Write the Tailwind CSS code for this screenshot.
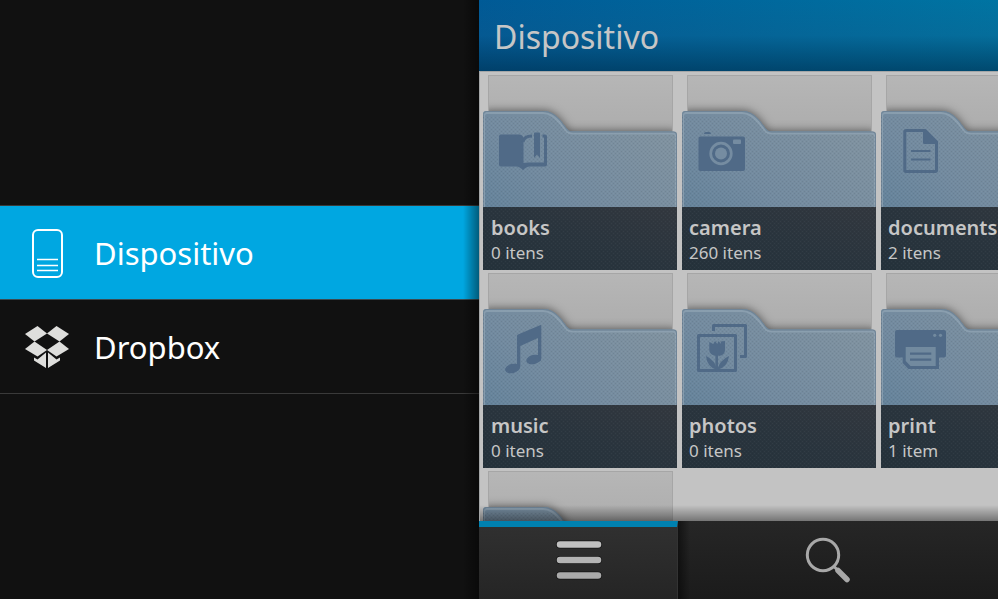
<!DOCTYPE html>
<html lang="pt">
<head>
  <meta charset="UTF-8" />
  <meta name="viewport" content="width=device-width, initial-scale=1.0" />
  <title>Dispositivo</title>
  <script src="https://cdn.jsdelivr.net/npm/@tailwindcss/browser@4"></script>
</head>
<body class="flex h-screen overflow-hidden bg-[#111111] font-['Noto_Sans','Open_Sans',sans-serif]">
  <!-- Shared folder shape -->
  <svg class="absolute size-0" aria-hidden="true">
    <defs>
      <linearGradient id="folderFill" x1="0" y1="1" x2="1" y2="0">
        <stop offset="0" stop-color="#5a7d97" />
        <stop offset="0.45" stop-color="#728a9f" />
        <stop offset="1" stop-color="#8394a0" />
      </linearGradient>
      <linearGradient id="labelFill" x1="0" y1="1" x2="1" y2="0">
        <stop offset="0" stop-color="#25323b" />
        <stop offset="0.5" stop-color="#2a353e" />
        <stop offset="1" stop-color="#33383f" />
      </linearGradient>
      <pattern id="weave" width="4" height="4" patternUnits="userSpaceOnUse">
        <path d="M0 0h1v1h-1zM2 2h1v1h-1z" fill="#fff" fill-opacity="0.05" />
        <path d="M2 0h1v1h-1zM0 2h1v1h-1z" fill="#000" fill-opacity="0.07" />
      </pattern>
      <symbol id="folder" viewBox="0 0 195 159">
        <path d="M0 159V3q0-3 3-3H60c8 0 13 4 18 10l6 8q2 2.500 6 2.500H191q3 0 3 3V159z" fill="url(#folderFill)" />
        <path d="M1 96V5q0-3 3-3H60c7 0 12 4 17 10l6 8q2 2.500 7 2.500H190q3 0 3 3V96" fill="none" stroke="#92a5b5" stroke-width="2" stroke-opacity="0.7" />
        <path d="M.5 96V3.500q0-3 3-3H60c8 0 13 4 18 10l6 8q2 2.500 6 2.500H190.500q3 0 3 3V96" fill="none" stroke="#6f8497" stroke-width="1" />
        <rect y="96" width="194" height="63" fill="url(#labelFill)" />
        <rect y="2" width="194" height="94" fill="url(#weave)" clip-path="path('M0 96V3H60c8 0 13 2 18 8l6 8q2 2.500 6 2.500H194V96z')" />
        <rect y="96" width="194" height="63" fill="url(#weave)" fill-opacity="0.7" />
      </symbol>
    </defs>
  </svg>

  <!-- Sidebar -->
  <aside class="relative flex w-[48%] shrink-0 flex-col justify-center">
    <nav class="border-t border-[#3a3a3a] text-[31px] text-white">
      <a href="#device" class="flex h-[94px] items-center gap-6 border-b border-[#3a4a50] bg-[#00a7e1] pl-6">
        <svg class="h-[50px] w-[46px]" viewBox="0 0 46 50" fill="none" stroke="#fff">
          <rect x="9" y="2" width="29" height="47" rx="5" stroke-width="2" />
          <path d="M13 31.500h21M13 37.500h21M13 42.500h21" stroke-width="1.600" />
        </svg>
        <span class="pt-0.5">Dispositivo</span>
      </a>
      <a href="#dropbox" class="flex h-[94px] items-center gap-6 border-b border-[#3a3a3a] pl-6">
        <svg class="h-[50px] w-[46px]" viewBox="0 0 46 50" fill="#dededc">
          <path d="M13.500 4L23 11.500 10.500 19.500 1 12z" />
          <path d="M32.500 4L45 12 35.500 19.500 23 11.500z" />
          <path d="M10.500 19.500L23 28 13.500 34.500 1 27z" />
          <path d="M35.500 19.500L45 27 32.500 34.500 23 28z" />
          <path d="M22 30.500V46L10 38.500V35.500l3.500 2z" />
          <path d="M24 30.500V46L36 38.500V35.500l-3.500 2z" />
        </svg>
        <span class="pt-0.5">Dropbox</span>
      </a>
    </nav>
    <div class="pointer-events-none absolute inset-y-0 right-0 w-4 bg-linear-to-l from-black/45 to-transparent"></div>
  </aside>

  <!-- File browser -->
  <main class="flex min-w-0 flex-1 flex-col overflow-hidden bg-[#c3c3c3] text-[#c6c6c6]">
    <header class="flex h-[71px] shrink-0 items-center bg-linear-to-r from-[#005a96] to-[#0074a2]">
      <div class="flex h-full w-full items-center bg-linear-to-b from-transparent via-[#1a5580]/20 to-[#003253]/65 pt-0.5 pl-[15px]">
        <h1 class="text-[32px]">Dispositivo</h1>
      </div>
    </header>

    <div class="relative min-h-0 flex-1 overflow-hidden border-t border-l border-[#a4a6a7]">
      <div class="grid grid-cols-[repeat(3,195px)] gap-x-1 gap-y-[3px] pt-[3px] pl-[3px]">
        <a href="#books" class="relative flex h-[195px] flex-col justify-between">
          <span class="absolute inset-x-[5px] top-0 h-20 overflow-hidden border border-[#a6a6a6] bg-linear-to-b from-[#b6b6b6] to-[#a9a9a9]">
            <svg class="absolute top-[35px] -left-1.5 h-[159px] w-[195px] overflow-visible drop-shadow-[0_0_5px_rgba(0,0,0,0.55)]"><use href="#folder" /></svg>
          </span>
          <svg class="absolute bottom-0 left-0 h-[159px] w-[195px]"><use href="#folder" /></svg>
          <svg class="relative mt-[52px] ml-3 h-[52px] w-14" viewBox="0 0 56 52" fill="#506a87">
            <path d="M6 7.500H24q3 0 4.500 3V36q3-.5 5-.5H49V10.500H47.500V7.500H50q2 0 2 2V37.500q0 2-2 2H34.500q-3 0-6.500 3.700-3.500-3.700-6.500-3.700H6q-2 0-2-2V9.500q0-2 2-2z" />
            <path d="M28 15q1-6 9-6" fill="none" stroke="#506a87" stroke-width="3" />
            <path d="M39 6.500q0-1 1-1h4q1 0 1 1V31l-3-3.500-3 3.500z" />
          </svg>
          <span class="relative h-[63px] pt-[9px] pl-2">
            <span class="block text-xl leading-6 font-semibold">books</span>
            <span class="block text-[17px] leading-[26px]">0 itens</span>
          </span>
        </a>

        <a href="#camera" class="relative flex h-[195px] flex-col justify-between">
          <span class="absolute inset-x-[5px] top-0 h-20 overflow-hidden border border-[#a6a6a6] bg-linear-to-b from-[#b6b6b6] to-[#a9a9a9]">
            <svg class="absolute top-[35px] -left-1.5 h-[159px] w-[195px] overflow-visible drop-shadow-[0_0_5px_rgba(0,0,0,0.55)]"><use href="#folder" /></svg>
          </span>
          <svg class="absolute bottom-0 left-0 h-[159px] w-[195px]"><use href="#folder" /></svg>
          <svg class="relative mt-[52px] ml-3 h-[52px] w-14" viewBox="0 0 56 52" fill="#506a87">
            <path d="M10 7q0-2 2-2h3q2 0 2 2z" />
            <rect x="4.500" y="9.500" width="46.500" height="34.500" rx="2" />
            <circle cx="27" cy="26.500" r="10.300" fill="none" stroke="#758ca1" stroke-width="2.700" />
            <circle cx="27" cy="26.500" r="6" fill="#758ca1" />
            <rect x="39" y="12.500" width="8" height="4.500" rx="1" fill="#758ca1" />
          </svg>
          <span class="relative h-[63px] pt-[9px] pl-[7px]">
            <span class="block text-xl leading-6 font-semibold">camera</span>
            <span class="block text-[17px] leading-[26px]">260 itens</span>
          </span>
        </a>

        <a href="#documents" class="relative flex h-[195px] flex-col justify-between">
          <span class="absolute inset-x-[5px] top-0 h-20 overflow-hidden border border-[#a6a6a6] bg-linear-to-b from-[#b6b6b6] to-[#a9a9a9]">
            <svg class="absolute top-[35px] -left-1.5 h-[159px] w-[195px] overflow-visible drop-shadow-[0_0_5px_rgba(0,0,0,0.55)]"><use href="#folder" /></svg>
          </span>
          <svg class="absolute bottom-0 left-0 h-[159px] w-[195px]"><use href="#folder" /></svg>
          <svg class="relative mt-[52px] ml-3 h-[52px] w-14" viewBox="0 0 56 52" fill="#506a87">
            <path d="M32 3.500H13q-1.200 0-1.200 1.200V43.300q0 1.200 1.200 1.200H42.300q1.200 0 1.200-1.200V15z" fill="none" stroke="#506a87" stroke-width="3" />
            <path d="M30 2.500h3L45 14.500V17H31.500q-1.500 0-1.500-1.500z" />
            <path d="M18 24h19.500M18 32.500h19.500" stroke="#506a87" stroke-width="2.200" />
          </svg>
          <span class="relative h-[63px] pt-[9px] pl-[7px]">
            <span class="block text-xl leading-6 font-semibold">documents</span>
            <span class="block text-[17px] leading-[26px]">2 itens</span>
          </span>
        </a>

        <a href="#music" class="relative flex h-[195px] flex-col justify-between">
          <span class="absolute inset-x-[5px] top-0 h-20 overflow-hidden border border-[#a6a6a6] bg-linear-to-b from-[#b6b6b6] to-[#a9a9a9]">
            <svg class="absolute top-[35px] -left-1.5 h-[159px] w-[195px] overflow-visible drop-shadow-[0_0_5px_rgba(0,0,0,0.55)]"><use href="#folder" /></svg>
          </span>
          <svg class="absolute bottom-0 left-0 h-[159px] w-[195px]"><use href="#folder" /></svg>
          <svg class="relative mt-[52px] ml-3 h-[52px] w-14 overflow-visible" viewBox="0 0 56 52" fill="#506a87">
            <path d="M22 11q0-1 1-1.500L45 .2q1.300-.4 1.300 1V33q0 4-3.300 3.500V13L25.300 21V41q0 3-3.300 3z" />
            <ellipse cx="17.500" cy="43.500" rx="7.600" ry="4.600" transform="rotate(-14 17.500 43.500)" />
            <ellipse cx="38.700" cy="34.500" rx="7.600" ry="4.600" transform="rotate(-14 38.700 34.500)" />
          </svg>
          <span class="relative h-[63px] pt-[9px] pl-2">
            <span class="block text-xl leading-6 font-semibold">music</span>
            <span class="block text-[17px] leading-[26px]">0 itens</span>
          </span>
        </a>

        <a href="#photos" class="relative flex h-[195px] flex-col justify-between">
          <span class="absolute inset-x-[5px] top-0 h-20 overflow-hidden border border-[#a6a6a6] bg-linear-to-b from-[#b6b6b6] to-[#a9a9a9]">
            <svg class="absolute top-[35px] -left-1.5 h-[159px] w-[195px] overflow-visible drop-shadow-[0_0_5px_rgba(0,0,0,0.55)]"><use href="#folder" /></svg>
          </span>
          <svg class="absolute bottom-0 left-0 h-[159px] w-[195px]"><use href="#folder" /></svg>
          <svg class="relative mt-[52px] ml-3 h-[52px] w-14 overflow-visible" viewBox="0 0 56 52" fill="#506a87">
            <rect x="4.500" y="10.500" width="37" height="35" fill="none" stroke="#506a87" stroke-width="3" stroke-linejoin="round" />
            <path d="M19.500 6V.5H51.500V31.500H46" fill="none" stroke="#506a87" stroke-width="3" stroke-linejoin="round" />
            <path d="M15.300 17l4 2 1.700-3 2.300 3 1.200-3 2.500 3 2-3v9q0 4.500-5 5.700V46h-2.600V30.700q-6.100-1.200-6.100-5.700z" />
            <path d="M27 16.500l4-.5v9q0 5-6 6z" />
            <path d="M12 31q9 4 11 14-10-3-11-14zM35 31q-9 4-12 14 11-3 12-14z" />
          </svg>
          <span class="relative h-[63px] pt-[9px] pl-[7px]">
            <span class="block text-xl leading-6 font-semibold">photos</span>
            <span class="block text-[17px] leading-[26px]">0 itens</span>
          </span>
        </a>

        <a href="#print" class="relative flex h-[195px] flex-col justify-between">
          <span class="absolute inset-x-[5px] top-0 h-20 overflow-hidden border border-[#a6a6a6] bg-linear-to-b from-[#b6b6b6] to-[#a9a9a9]">
            <svg class="absolute top-[35px] -left-1.5 h-[159px] w-[195px] overflow-visible drop-shadow-[0_0_5px_rgba(0,0,0,0.55)]"><use href="#folder" /></svg>
          </span>
          <svg class="absolute bottom-0 left-0 h-[159px] w-[195px]"><use href="#folder" /></svg>
          <svg class="relative mt-[52px] ml-3 h-[52px] w-14" viewBox="0 0 56 52" fill="#506a87">
            <path d="M4 5H51q2 0 2 2V30.500q0 2-2 2H46V44H15.500L9.700 38V32.500H4q-2 0-2-2V7q0-2 2-2z" />
            <path d="M12.700 22h30V41H17.500L12.700 36z" fill="#728a9f" />
            <path d="M17 28.700h21.300M17 34.700h21.300" stroke="#506a87" stroke-width="2.200" />
            <circle cx="41.700" cy="10.300" r="1.600" fill="#728a9f" />
            <circle cx="47.500" cy="10.300" r="1.600" fill="#728a9f" />
          </svg>
          <span class="relative h-[63px] pt-[9px] pl-[7px]">
            <span class="block text-xl leading-6 font-semibold">print</span>
            <span class="block text-[17px] leading-[26px]">1 item</span>
          </span>
        </a>

        <a href="#more" class="relative h-[195px]">
          <span class="absolute inset-x-[5px] top-0 h-20 overflow-hidden border border-[#a6a6a6] bg-linear-to-b from-[#b6b6b6] to-[#a9a9a9]">
            <svg class="absolute top-[35px] -left-1.5 h-[159px] w-[195px] overflow-visible drop-shadow-[0_0_5px_rgba(0,0,0,0.55)]"><use href="#folder" /></svg>
          </span>
          <svg class="absolute bottom-0 left-0 h-[159px] w-[195px]"><use href="#folder" /></svg>
        </a>
      </div>
      <div class="pointer-events-none absolute inset-x-0 bottom-0 h-4 bg-linear-to-t from-black/40 to-transparent"></div>
    </div>

    <!-- Action bar -->
    <footer class="flex h-[78px] shrink-0 bg-linear-to-b from-[#262626] to-[#1b1b1b]">
      <button aria-label="Menu" class="relative flex w-[199px] shrink-0 items-center justify-center border-t-[6px] border-r border-t-[#0081b0] border-r-[#333333] bg-linear-to-b from-[#303030] to-[#252525] pb-1.5 pl-0.5">
        <svg class="h-10 w-[46px]" viewBox="0 0 46 40" stroke-linecap="round">
          <path d="M4 4.500h38M4 20h38M4 35.500h38" stroke="#151515" stroke-width="8" />
          <path d="M4 4.500h38" stroke="#c0c0c0" stroke-width="6.500" />
          <path d="M4 20h38" stroke="#b4b4b4" stroke-width="6.500" />
          <path d="M4 35.500h38" stroke="#aaaaaa" stroke-width="6.500" />
        </svg>
      </button>
      <button aria-label="Buscar" class="relative flex w-[300px] shrink-0 items-center justify-center">
        <span class="absolute inset-y-0 left-0 w-3 bg-linear-to-r from-black/50 to-transparent"></span>
        <svg class="size-[46px]" viewBox="0 0 46 46" fill="none" stroke="#a8a8a8">
          <circle cx="18" cy="18" r="15.700" stroke-width="3" />
          <path d="M28.500 29l4 4" stroke-width="3" />
          <path d="M33 33.500l9 9" stroke-width="5.500" stroke-linecap="round" />
        </svg>
      </button>
    </footer>
  </main>
</body>
</html>
